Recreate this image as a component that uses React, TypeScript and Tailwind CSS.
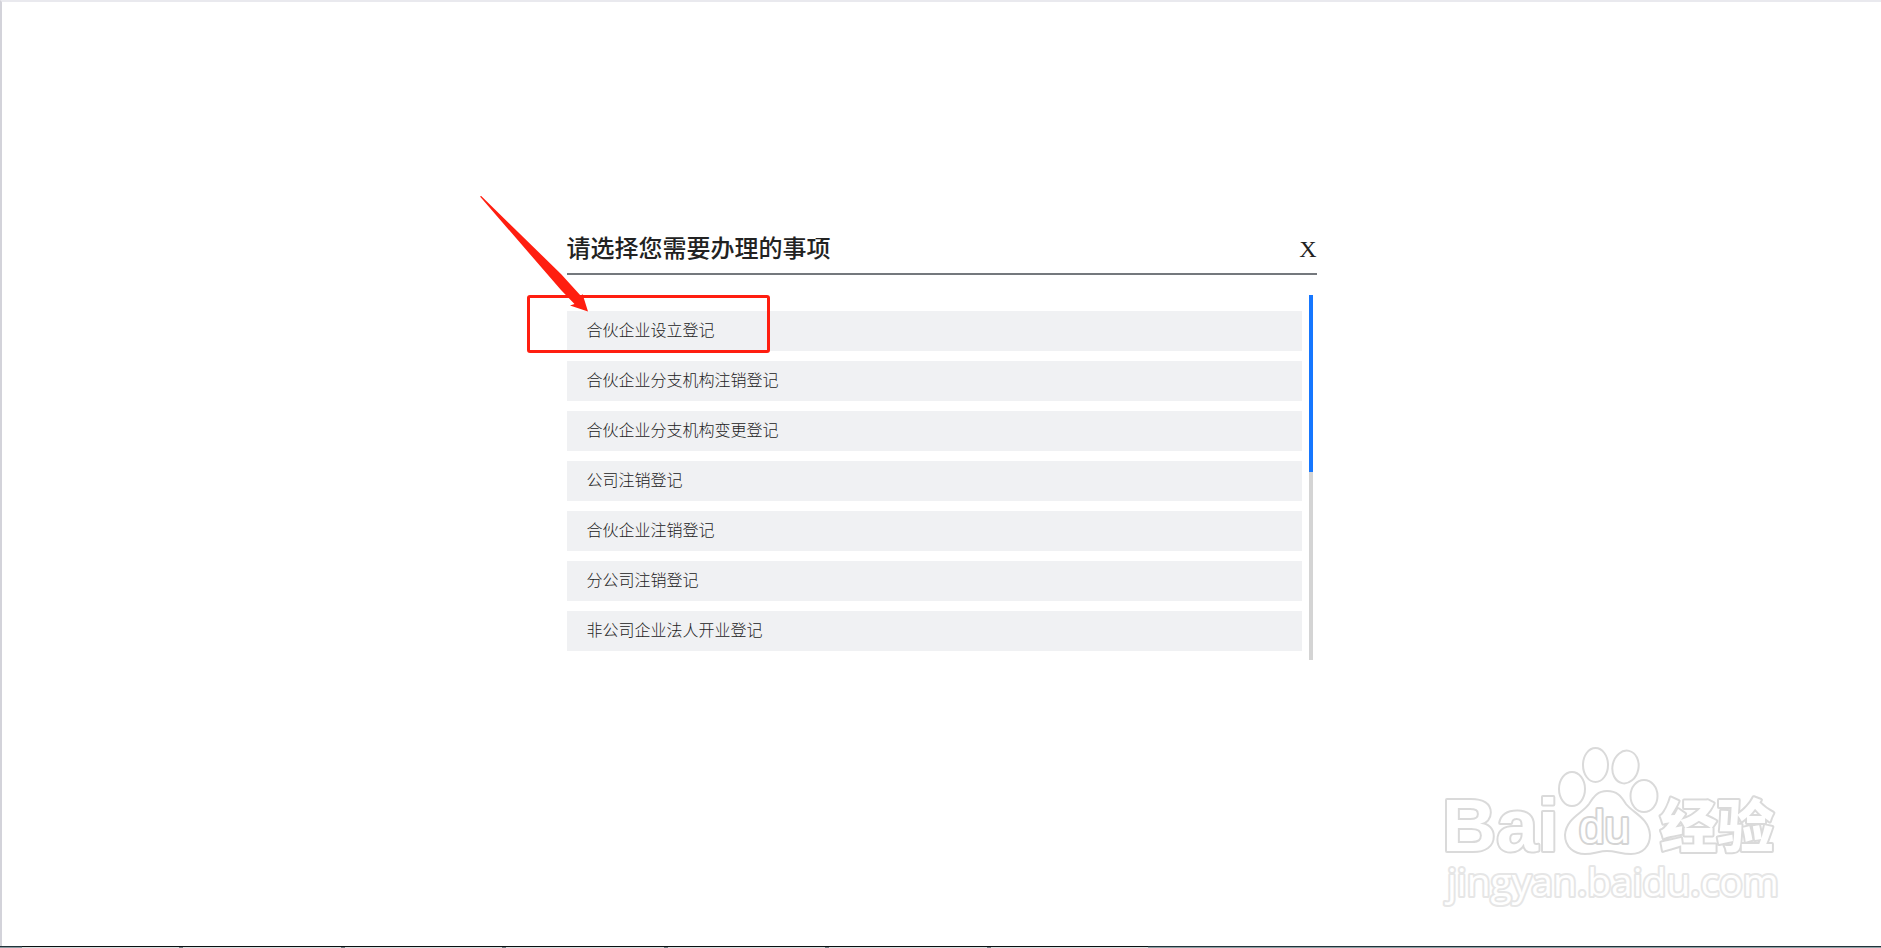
const ITEMS = [
  "合伙企业设立登记",
  "合伙企业分支机构注销登记",
  "合伙企业分支机构变更登记",
  "公司注销登记",
  "合伙企业注销登记",
  "分公司注销登记",
  "非公司企业法人开业登记",
];

function Callout() {
  return (
    <div className="pointer-events-none absolute inset-0" aria-hidden="true">
      {/* Frame around the first item */}
      <div className="absolute -left-10 top-[70px] h-[58px] w-[243px] rounded-[3px] border-3 border-[#ff1e10]" />
      {/* Arrow */}
      <svg
        className="absolute -left-[88px] -top-[30px] h-[117px] w-[112px]"
        viewBox="0 0 112 117"
        fill="#ff1e10"
      >
        <path d="M1 1.5 L2.2 1 L82 79 L102 101 L103.5 99 L109 116.500 L91 110.500 L95.5 109 L82 95 Z" />
      </svg>
    </div>
  );
}

function MatterDialog() {
  return (
    <section
      role="dialog"
      aria-labelledby="dialog-title"
      className="relative w-full max-w-[750px] pb-16"
    >
      <header className="flex h-[50px] items-center justify-between border-b-2 border-[#74787d]">
        <h1 id="dialog-title" className="pb-1 text-2xl font-medium text-[#222]">
          请选择您需要办理的事项
        </h1>
        <button type="button" aria-label="X" className="font-['Liberation_Serif',serif] text-2xl text-[#222]">
          X
        </button>
      </header>

      <div className="mt-5 flex h-[365px] gap-[7px] pr-1">
        <ul className="flex flex-1 flex-col gap-2.5 overflow-hidden pt-4">
          {ITEMS.map((item) => (
            <li key={item}>
              <button
                type="button"
                className="block h-10 w-full bg-[#f0f1f3] px-5 pb-1 text-left text-base font-light text-[#222]"
              >
                {item}
              </button>
            </li>
          ))}
        </ul>
        {/* Scroll track */}
        <div className="w-1 bg-[#d4d4d4]">
          <div className="h-[177px] bg-[#1677ff]" />
        </div>
      </div>

      <Callout />
    </section>
  );
}

function Watermark() {
  return (
    <svg
      className="pointer-events-none absolute bottom-[28px] right-[81px] h-[190px] w-[380px]"
      viewBox="0 0 380 190"
      fill="#fff"
      stroke="#dadada"
      strokeWidth="2"
      strokeLinejoin="round"
    >
      <g strokeWidth="4" style={{ paintOrder: "stroke" }}>
        <text x="22" y="121" fontSize="75" className="font-['Liberation_Sans',sans-serif] font-bold">
          Bai
        </text>
        <text x="240" y="117" fontSize="57" className="font-['Noto_Sans_CJK_SC',sans-serif] font-black">
          经验
        </text>
        <text x="27" y="166" fontSize="39" stroke="#e6e6e6" className="font-['Open_Sans',sans-serif]">
          jingyan.baidu.com
        </text>
      </g>
      {/* Paw */}
      <ellipse cx="152" cy="59" rx="13" ry="17" />
      <ellipse cx="175.500" cy="35" rx="12.500" ry="17" />
      <ellipse cx="205.500" cy="37" rx="13" ry="16.500" transform="rotate(12 205.500 37)" />
      <ellipse cx="224" cy="66" rx="13.500" ry="16" />
      <path d="M187 61 C178 61 174 66 169 74 C163 83 146 88 145 105 C145 117 154 124 165 124 C174 124 179 121 187 121 C196 121 201 124 211 124 C223 124 230 116 230 105 C229 88 213 83 206 74 C201 66 197 61 187 61 Z" />
      <text
        x="159"
        y="113"
        fontSize="46"
        strokeWidth="4"
        stroke="#d4d4d4"
        style={{ paintOrder: "stroke" }}
        className="font-['Liberation_Sans',sans-serif]"
      >
        du
      </text>
    </svg>
  );
}

function Taskbar() {
  return (
    <footer className="flex h-0.5">
      <div className="w-[22px] border-t border-[#22333a] bg-[#8a9aa0]" />
      <div className="flex w-[1126px] divide-x-4 divide-[#6f7c82] border-t border-[#0b1012] bg-[#d9dfdf]">
        {[0, 1, 2, 3, 4, 5, 6].map((tab) => (
          <div key={tab} className="flex-1" />
        ))}
      </div>
      <div className="flex-1 border-t border-[#22333a] bg-[#8fa1a5]" />
    </footer>
  );
}

export default function App() {
  return (
    <div className="relative flex min-h-screen flex-col bg-white font-['Noto_Sans_CJK_SC',sans-serif]">
      <main className="flex flex-1 items-center justify-center border-l-2 border-t-2 border-l-[#d3d3da] border-t-[#e9e9ee]">
        <MatterDialog />
      </main>
      <Taskbar />
      <Watermark />
    </div>
  );
}
